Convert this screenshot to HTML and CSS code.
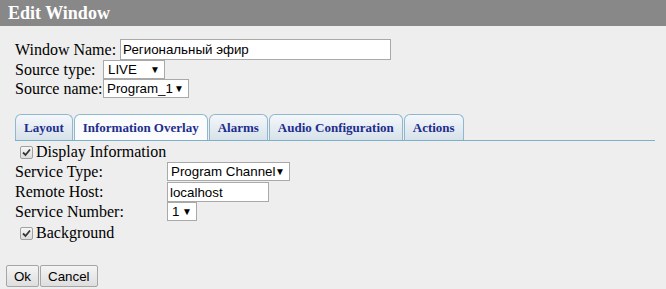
FILE: index.html
```html
<!DOCTYPE html>
<html lang="ru">
<head>
    <meta charset="UTF-8">
    <title>Edit Window</title>
    <link rel="stylesheet" href="styles.css">
</head>
<body>
    <!-- Title bar -->
    <div class="titlebar">Edit Window</div>

    <!-- Window settings -->
    <div class="form">
        <div class="row row-name">
            <label>Window Name:</label>
            <input type="text" class="txt txt-name" value="Региональный эфир">
        </div>
        <div class="row">
            <label class="lbl-src">Source type:</label>
            <span class="sel sel-live">LIVE</span>
        </div>
        <div class="row">
            <label class="lbl-src">Source name:</label>
            <span class="sel sel-prog">Program_1</span>
        </div>

        <!-- Tabs -->
        <div class="tabs">
            <span class="tab">Layout</span>
            <span class="tab active">Information Overlay</span>
            <span class="tab">Alarms</span>
            <span class="tab">Audio Configuration</span>
            <span class="tab">Actions</span>
        </div>

        <div class="panel">
            <div class="row chk-row">
                <span class="chk"><svg width="9" height="9" viewBox="0 0 9 9"><path d="M1 4.5 L3.5 7 L8 1.5" fill="none" stroke="#333" stroke-width="1.8"/></svg></span>
                <span>Display Information</span>
            </div>
            <div class="row field">
                <label>Service Type:</label>
                <span class="sel sel-chan">Program Channel</span>
            </div>
            <div class="row field field-host">
                <label>Remote Host:</label>
                <input type="text" class="txt txt-host" value="localhost">
            </div>
            <div class="row field">
                <label>Service Number:</label>
                <span class="sel sel-num">1</span>
            </div>
            <div class="row chk-row chk-bg">
                <span class="chk"><svg width="9" height="9" viewBox="0 0 9 9"><path d="M1 4.5 L3.5 7 L8 1.5" fill="none" stroke="#333" stroke-width="1.8"/></svg></span>
                <span>Background</span>
            </div>
        </div>
    </div>

    <!-- Buttons -->
    <div class="buttons">
        <button>Ok</button>
        <button>Cancel</button>
    </div>
</body>
</html>
```

FILE: styles.css
```css
/* Global */
body {
    margin: 0;
    background-color: #eeeeee;
    font-family: "Liberation Serif", "Times New Roman", serif;
    font-size: 16px;
    color: #000;
}

.titlebar {
    height: 26px;
    line-height: 26px;
    background-color: #888888;
    color: white;
    font-weight: bold;
    font-size: 18px;
    padding-left: 8px;
}

.form {
    padding: 13px 0 0 15px;
}

.row {
    display: flex;
    align-items: center;
    height: 19px;
}

.row-name {
    height: 21px;
}

.row-name label {
    margin-right: 4px;
}

.lbl-src {
    width: 88px;
}

/* Inputs and selects */
.txt {
    box-sizing: border-box;
    margin: 0;
    border: 1px solid #a9a9a9;
    background: white;
    font-family: "Liberation Sans", Arial, sans-serif;
    font-size: 13.33px;
    padding: 0 2px;
    outline: none;
}

.txt-name {
    width: 271px;
    height: 21px;
}

.txt-host {
    width: 102px;
    height: 20px;
}

.sel {
    box-sizing: border-box;
    position: relative;
    display: inline-block;
    height: 19px;
    line-height: 17px;
    border: 1px solid #a9a9a9;
    background: white;
    font-family: "Liberation Sans", Arial, sans-serif;
    font-size: 13.33px;
    padding-left: 4px;
}

.sel::after {
    content: "\25BC";
    position: absolute;
    right: 4px;
    top: 0;
    font-size: 10px;
}

.sel-live { width: 62px; }
.sel-prog { width: 86px; padding-left: 3px; }
.sel-chan { width: 123px; padding-left: 3px; }
.sel-num { width: 30px; }

/* Tabs */
.tabs {
    display: flex;
    gap: 1px;
    width: 640px;
    margin-top: 16px;
    height: 26px;
    border-bottom: 1px solid #7fb0c8;
    align-items: flex-end;
}

.tab {
    box-sizing: border-box;
    height: 26px;
    line-height: 25px;
    padding: 0 8px;
    border: 1px solid #8fb8cc;
    border-bottom: none;
    border-radius: 6px 6px 0 0;
    background: linear-gradient(#f4f7fa, #d6e2ea);
    color: #1e2d8c;
    font-weight: bold;
    font-size: 13px;
}

.tab.active {
    background: #f9fbfc;
}

/* Panel */
.panel {
    padding-top: 1px;
}

.chk-row {
    height: 20px;
    padding-left: 5px;
}

.chk {
    box-sizing: border-box;
    display: inline-flex;
    align-items: center;
    justify-content: center;
    width: 13px;
    height: 13px;
    margin-right: 3px;
    border: 1px solid #a0a0a0;
    border-radius: 2px;
    background: linear-gradient(#f6f6f6, #dcdcdc);
}

.field label {
    width: 152px;
}

.field-host {
    height: 20px;
    margin-top: 1px;
}

.chk-bg {
    margin-top: 1px;
    height: 22px;
}

/* Buttons */
.buttons {
    display: flex;
    gap: 1px;
    padding: 21px 0 0 6px;
}

.buttons button {
    height: 22px;
    margin: 0;
    padding: 0 7px;
    border: 1px solid #a6a6a6;
    border-radius: 2px;
    background: linear-gradient(#f4f4f4, #dedede);
    font-family: "Liberation Sans", Arial, sans-serif;
    font-size: 13.33px;
    color: #000;
}
```
